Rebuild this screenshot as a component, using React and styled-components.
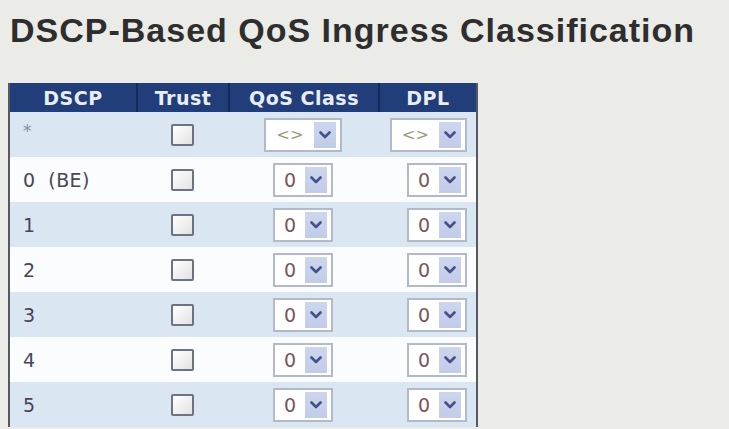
import React from "react";
import styled, { createGlobalStyle } from "styled-components";

const rows = [
  { dscp: "*", any: true },
  { dscp: "0  (BE)" },
  { dscp: "1" },
  { dscp: "2" },
  { dscp: "3" },
  { dscp: "4" },
  { dscp: "5" },
];

function Chevron() {
  return (
    <svg width="12" height="8" viewBox="0 0 12 8">
      <path d="M1.5 1.5 L6 6 L10.5 1.5" fill="none" stroke="#42518a" strokeWidth="2.6" strokeLinecap="round" strokeLinejoin="round" />
    </svg>
  );
}

function Select({ value, width, muted }) {
  return (
    <SelectBox $width={width}>
      <SelectValue $muted={muted}>{value}</SelectValue>
      <SelectArrow>
        <Chevron />
      </SelectArrow>
    </SelectBox>
  );
}

export default function App() {
  return (
    <Page>
      <GlobalStyle />
      <Title>DSCP-Based QoS Ingress Classification</Title>
      <Table>
        <colgroup>
          <col style={{ width: 126 }} />
          <col style={{ width: 92 }} />
          <col style={{ width: 150 }} />
          <col style={{ width: 98 }} />
        </colgroup>
        <thead>
          <tr>
            <HeadCell>DSCP</HeadCell>
            <HeadCell $divider>Trust</HeadCell>
            <HeadCell $divider>QoS Class</HeadCell>
            <HeadCell $divider>DPL</HeadCell>
          </tr>
        </thead>
        <tbody>
          {rows.map((row, i) => (
            <Row key={row.dscp} $alt={i % 2 === 0}>
              <Cell>
                {row.any ? <Star>*</Star> : <DscpText>{row.dscp}</DscpText>}
              </Cell>
              <Cell $align="center">
                <Checkbox />
              </Cell>
              <Cell $align="center">
                {row.any ? <Select value="<>" width={78} muted /> : <Select value="0" width={60} />}
              </Cell>
              <Cell $align="right">
                {row.any ? <Select value="<>" width={77} muted /> : <Select value="0" width={60} />}
              </Cell>
            </Row>
          ))}
        </tbody>
      </Table>
    </Page>
  );
}

const GlobalStyle = createGlobalStyle`
  html, body {
    margin: 0;
    background: #ebebe7;
  }
`;

const Page = styled.div`
  padding: 10px 0 0 8px;
  min-height: 429px;
  box-sizing: border-box;
  background: #ebebe7;
`;

const Title = styled.h1`
  margin: 0 0 33px 2px;
  font-family: "Liberation Sans", Arial, sans-serif;
  font-size: 34px;
  line-height: 40px;
  letter-spacing: 1px;
  font-weight: bold;
  color: #2e2e2e;
`;

const Table = styled.table`
  width: 470px;
  table-layout: fixed;
  border-collapse: separate;
  border-spacing: 0;
  border-left: 2px solid #555a62;
  border-right: 2px solid #555a62;
  font-family: "DejaVu Sans", Verdana, sans-serif;
`;

const HeadCell = styled.th`
  height: 29px;
  padding: 0;
  background: #213d7a;
  color: #e9edf5;
  font-size: 19px;
  font-weight: bold;
  letter-spacing: 0.5px;
  text-align: center;
  border-left: ${(p) => (p.$divider ? "2px solid #14295b" : "none")};
`;

const Row = styled.tr`
  background: ${(p) => (p.$alt ? "#dbe6f3" : "#fbfcfd")};
`;

const Cell = styled.td`
  height: 45px;
  padding: ${(p) => (p.$align === "right" ? "0 9px 0 0" : p.$align === "center" ? "0" : "0 0 0 13px")};
  text-align: ${(p) => p.$align || "left"};
  vertical-align: middle;
`;

const DscpText = styled.span`
  font-size: 19px;
  letter-spacing: 0.4px;
  color: #4a4459;
  white-space: pre;
`;

const Star = styled.span`
  font-size: 17px;
  color: #8c8c94;
  position: relative;
  top: -4px;
`;

const Checkbox = styled.span`
  display: inline-block;
  vertical-align: middle;
  width: 23px;
  height: 22px;
  box-sizing: border-box;
  border: 2px solid #6c7384;
  border-radius: 2px;
  background: linear-gradient(135deg, #ffffff 0%, #eeeeee 60%, #e2e2e4 100%);
`;

const SelectBox = styled.span`
  display: inline-flex;
  vertical-align: middle;
  align-items: stretch;
  width: ${(p) => p.$width}px;
  height: 34px;
  box-sizing: border-box;
  border: 2px solid #b2b9c8;
  background: #ffffff;
  padding: 2px 4px 2px 0;
`;

const SelectValue = styled.span`
  flex: 1;
  display: flex;
  align-items: center;
  justify-content: center;
  font-family: "DejaVu Sans", Verdana, sans-serif;
  font-size: ${(p) => (p.$muted ? "16px" : "19px")};
  color: ${(p) => (p.$muted ? "#9e9b7c" : "#7a5556")};
`;

const SelectArrow = styled.span`
  width: 22px;
  display: flex;
  align-items: center;
  justify-content: center;
  background: linear-gradient(180deg, #cdd6ee 0%, #c2cce8 100%);
`;
